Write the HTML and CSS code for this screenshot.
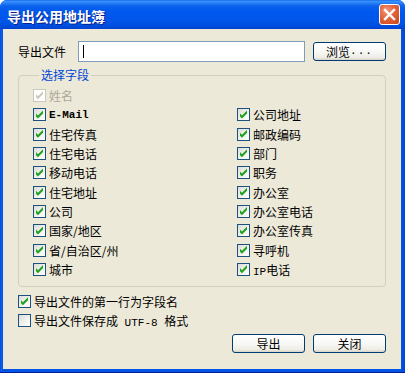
FILE: index.html
```html
<!DOCTYPE html>
<html lang="zh">
<head>
<meta charset="utf-8">
<title>导出公用地址簿</title>
<link rel="stylesheet" href="styles.css">
</head>
<body>
<div class="window">
  <div class="titlebar">
    <span class="title">导出公用地址簿</span>
    <span class="close">
      <svg width="13" height="13" viewBox="0 0 13 13"><path d="M2 2 L11 11 M11 2 L2 11" stroke="#fff" stroke-width="2.4" stroke-linecap="square"/></svg>
    </span>
  </div>
  <div class="client">
    <div class="filerow">
      <span class="label">导出文件</span>
      <span class="input"><span class="caret"></span></span>
      <span class="btn">浏览<span class="lat dots">...</span></span>
    </div>
    <fieldset class="group">
      <legend>选择字段</legend>
      <div class="grid">
        <label class="cb disabled"><span class="box on"></span><span>姓名</span></label>
        <label class="cb"><span class="box on"></span><span class="lat b">E-Mail</span></label>
        <label class="cb"><span class="box on"></span><span>住宅传真</span></label>
        <label class="cb"><span class="box on"></span><span>住宅电话</span></label>
        <label class="cb"><span class="box on"></span><span>移动电话</span></label>
        <label class="cb"><span class="box on"></span><span>住宅地址</span></label>
        <label class="cb"><span class="box on"></span><span>公司</span></label>
        <label class="cb"><span class="box on"></span><span>国家/地区</span></label>
        <label class="cb"><span class="box on"></span><span>省/自治区/州</span></label>
        <label class="cb"><span class="box on"></span><span>城市</span></label>
        <span class="cb empty"></span>
        <label class="cb"><span class="box on"></span><span>公司地址</span></label>
        <label class="cb"><span class="box on"></span><span>邮政编码</span></label>
        <label class="cb"><span class="box on"></span><span>部门</span></label>
        <label class="cb"><span class="box on"></span><span>职务</span></label>
        <label class="cb"><span class="box on"></span><span>办公室</span></label>
        <label class="cb"><span class="box on"></span><span>办公室电话</span></label>
        <label class="cb"><span class="box on"></span><span>办公室传真</span></label>
        <label class="cb"><span class="box on"></span><span>寻呼机</span></label>
        <label class="cb"><span class="box on"></span><span><span class="lat">IP</span>电话</span></label>
      </div>
    </fieldset>
    <div class="options">
      <label class="cb"><span class="box on"></span><span>导出文件的第一行为字段名</span></label>
      <label class="cb"><span class="box"></span><span>导出文件保存成<span class="lat"> UTF-8 </span>格式</span></label>
    </div>
    <div class="buttons">
      <span class="btn">导出</span>
      <span class="btn">关闭</span>
    </div>
  </div>
</div>
</body>
</html>
```
FILE: styles.css
```css
* { box-sizing: border-box; }
html, body { margin: 0; padding: 0; background: #ffffff; }
body {
  font-family: "Noto Sans CJK SC", "Liberation Sans", sans-serif;
  font-size: 12px;
  color: #000;
}
.window {
  width: 405px;
  height: 373px;
  display: flex;
  flex-direction: column;
  border-radius: 7px 7px 0 0;
  background: linear-gradient(to right, #0831D9 0, #166AEE 1px, #0055E5 2px, #0055E5 402px, #0845D0 404px);
  border-bottom: 1px solid #001D9A;
  overflow: hidden;
}
.titlebar {
  height: 29px;
  flex: none;
  display: flex;
  align-items: center;
  justify-content: space-between;
  padding: 2px 5px 0 7px;
  background: linear-gradient(to bottom, #0A5DE8 0, #3D95FF 1px, #2A80F8 3px, #0A61EB 6px, #0058EE 12px, #0055EA 20px, #0050E0 25px, #0046D6 28px, #0040C8 29px);
}
.title {
  color: #fff;
  font-weight: bold;
  font-size: 14px;
  text-shadow: 1px 1px 0 #0A1E84;
}
.close {
  width: 21px;
  height: 21px;
  margin-top: -3px;
  border: 1px solid #fff;
  border-radius: 3px;
  background: radial-gradient(circle at 35% 30%, #F09A7E 0, #E4673F 40%, #CC4418 100%);
  display: flex;
  align-items: center;
  justify-content: center;
}
.client {
  flex: 1;
  margin: 0 4px 3px 3px;
  background: #ECE9D8;
  display: flex;
  flex-direction: column;
}
.lat { font-family: "Liberation Mono", monospace; font-size: 11px; white-space: pre; }
.lat.b { font-weight: bold; }
.dots { letter-spacing: 1px; }
.filerow {
  display: flex;
  align-items: center;
  height: 21px;
  margin-top: 12px;
  padding-left: 15px;
}
.label { width: 60px; }
.input {
  width: 227px;
  height: 21px;
  border: 1px solid #7F9DB9;
  background: #fff;
  display: flex;
  align-items: center;
  padding-left: 4px;
}
.caret { width: 1px; height: 13px; background: #000; }
.btn {
  width: 73px;
  height: 19px;
  border: 1px solid #003C74;
  border-radius: 3px;
  background: linear-gradient(to bottom, #FFFFFF 0, #F8F8F6 50%, #EEEDE6 85%, #D8D3C6 100%);
  display: flex;
  align-items: center;
  justify-content: center;
  line-height: 1;
}
.filerow .btn { margin-left: 8px; }
.group {
  margin: 5px 15px 0 15px;
  padding: 3px 0 7px 14px;
  border: 1px solid #D0D0BF;
  border-radius: 4px;
  min-width: 0;
}
.group legend {
  color: #0046D5;
  line-height: 16px;
  padding: 0 2px;
  margin-left: 6px;
}
.grid {
  display: grid;
  grid-template-columns: 204px 1fr;
  grid-template-rows: repeat(10, 19.33px);
  grid-auto-flow: column;
}
.cb {
  display: flex;
  align-items: center;
  gap: 3px;
  height: 19px;
  white-space: nowrap;
}
.grid .cb { height: auto; }
.box {
  width: 13px;
  height: 13px;
  flex: none;
  border: 1px solid #1C5180;
  background: linear-gradient(135deg, #DCDCD7 0, #F0F0EA 50%, #FFFFFF 100%);
  position: relative;
}
.box.on::after {
  content: "";
  position: absolute;
  left: 0;
  top: 0;
  width: 11px;
  height: 11px;
  background: #21A121;
  clip-path: polygon(18% 36%, 36% 55%, 82% 9%, 82% 36%, 36% 82%, 18% 64%);
}
.disabled { color: #ACA899; }
.disabled .box { border-color: #CAC8BB; background: #fff; }
.disabled .box.on::after { background: #CAC8BB; }
.options {
  margin-top: 5px;
  padding-left: 15px;
  display: flex;
  flex-direction: column;
}
.buttons {
  display: flex;
  justify-content: flex-end;
  gap: 8px;
  margin-top: 4px;
  padding-right: 15px;
}
```
